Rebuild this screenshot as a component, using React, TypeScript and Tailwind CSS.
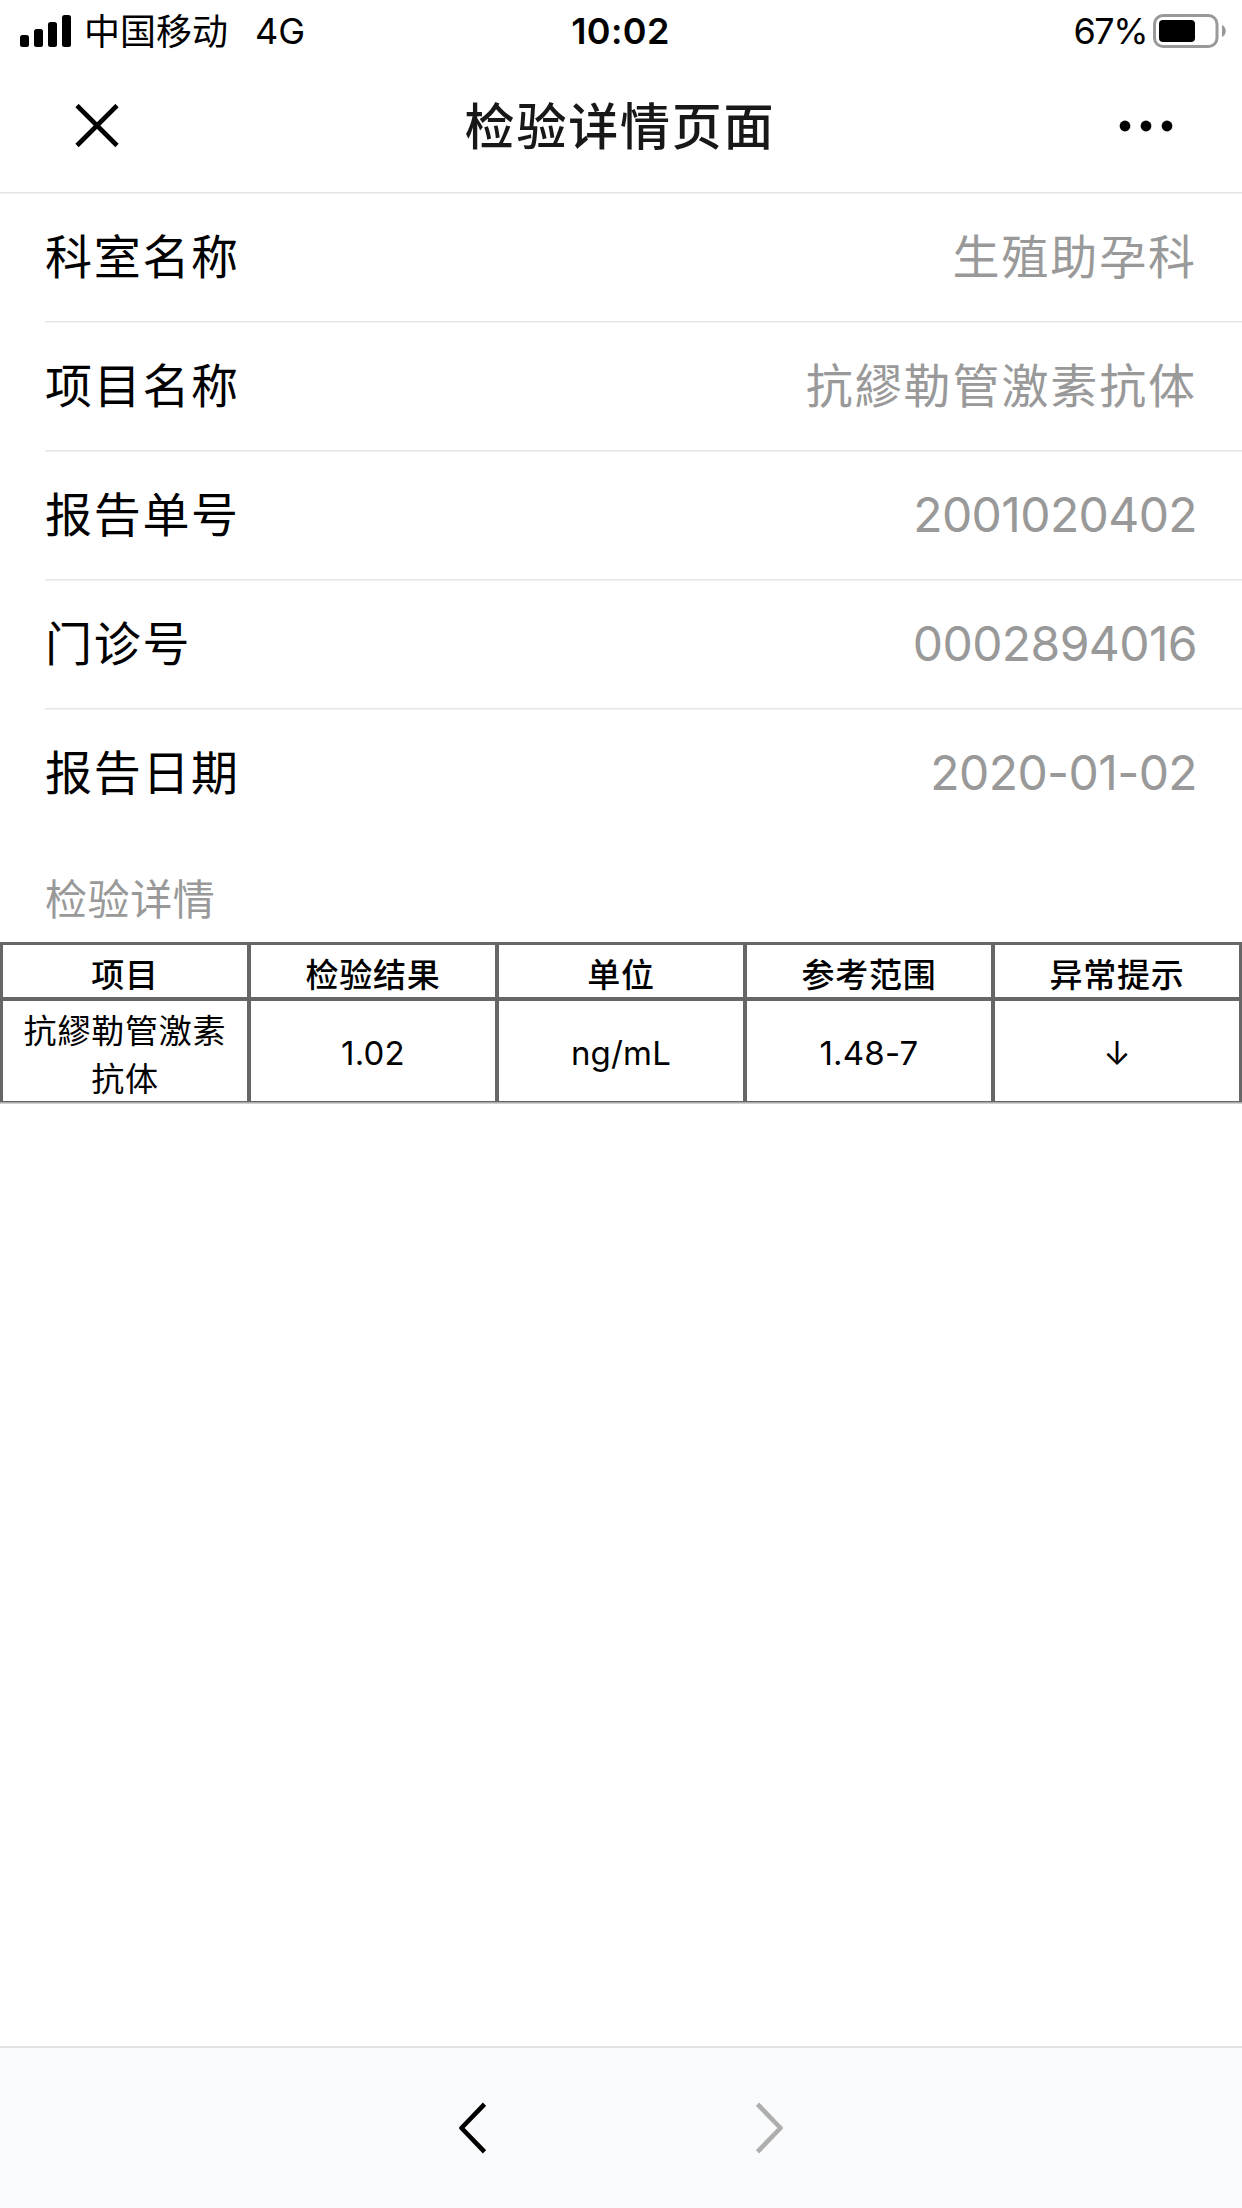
type TRow = {
  label: string;
  value: string;
  numeric?: boolean;
};

const rows: TRow[] = [
  { label: "科室名称", value: "生殖助孕科" },
  { label: "项目名称", value: "抗繆勒管激素抗体" },
  { label: "报告单号", value: "2001020402", numeric: true },
  { label: "门诊号", value: "0002894016", numeric: true },
  { label: "报告日期", value: "2020-01-02", numeric: true },
];

const columns = ["项目", "检验结果", "单位", "参考范围", "异常提示"];
const result = ["1.02", "ng/mL", "1.48-7", "↓"];

const StatusBar = () => {
  return (
    <div className="grid h-[61px] grid-cols-3 items-center pl-5 pr-4 text-[36px] leading-[56px] text-black">
      <div className="flex items-center">
        <svg width="51" height="32" viewBox="0 0 51 32" className="shrink-0">
          <rect x="0" y="20" width="9" height="12" rx="2.5" />
          <rect x="14" y="14" width="9" height="18" rx="2.5" />
          <rect x="28" y="7" width="9" height="25" rx="2.5" />
          <rect x="42" y="0" width="9" height="32" rx="2.5" />
        </svg>
        <span className="ml-[13px] whitespace-nowrap pt-[3px]">中国移动</span>
        <span className="ml-[27px]">4G</span>
      </div>
      <div className="pr-[5px] text-center font-semibold tracking-[0.4px]">10:02</div>
      <div className="flex items-center justify-end">
        <span className="tracking-[-1.5px]">67%</span>
        <svg width="73" height="34" viewBox="0 0 73 34" className="ml-1.5 shrink-0">
          <rect x="1.5" y="1.5" width="62.5" height="31" rx="8.5" fill="none" stroke="#999" strokeWidth="3" />
          <rect x="6" y="6" width="36" height="22" rx="4" />
          <path d="M69 11c5 2 5 10 0 12z" fill="#999" />
        </svg>
      </div>
    </div>
  );
};

const Header = () => {
  return (
    <div className="flex h-[131px] items-center justify-between pb-0.5 pl-[75px] pr-[69px]">
      <svg width="44" height="44" viewBox="0 0 44 44" fill="none" stroke="#000" strokeWidth="4.6">
        <path d="M2 1.5l40 40M42 1.5l-40 40" />
      </svg>
      <h1 className="pl-0.5 pt-[3px] text-[50px] font-medium leading-[76px] tracking-[1.8px] text-[#181818]">
        检验详情页面
      </h1>
      <svg width="54" height="12" viewBox="0 0 54 12">
        <circle cx="6" cy="6" r="5.4" />
        <circle cx="27" cy="6" r="5.4" />
        <circle cx="48" cy="6" r="5.4" />
      </svg>
    </div>
  );
};

const InfoRow = ({ label, value, numeric }: TRow) => {
  return (
    <div className="flex h-[129px] items-center justify-between border-t border-[#e4e4e4] pr-[45px] leading-[72px] shadow-[inset_0_1px_0_#f2f2f2]">
      <span className="text-[47px] tracking-[1.7px] text-black">{label}</span>
      {numeric ? (
        <span className="text-[48px] tracking-[-0.6px] text-[#999]">{value}</span>
      ) : (
        <span className="text-[47px] tracking-[1.9px] text-[#999]">{value}</span>
      )}
    </div>
  );
};

const ResultTable = () => {
  return (
    <div className="border-b border-[#d0d0d0]">
      <div className="grid grid-cols-[repeat(5,244px)] grid-rows-[52px_100px] gap-1 border-b border-[#aaa] bg-[#666] px-[3px] pb-px pt-[3px] text-center text-[33px] leading-[48px] text-black">
        {columns.map((name) => (
          <div key={name} className="flex items-center justify-center bg-white pt-[7px] font-medium tracking-[0.8px]">
            {name}
          </div>
        ))}
        <div className="flex items-center justify-center bg-white px-4 pt-[7px] tracking-[0.8px]">
          抗繆勒管激素抗体
        </div>
        {result.map((value) => (
          <div key={value} className="flex items-center justify-center bg-white pt-1 tracking-[0.2px]">
            {value}
          </div>
        ))}
      </div>
    </div>
  );
};

const BottomBar = () => {
  return (
    <div className="flex h-[162px] items-center justify-center gap-[270px] border-t-2 border-[#e1e3e5] bg-[#f9fafc]">
      <svg width="27" height="52" viewBox="0 0 27 52" fill="none" stroke="#000" strokeWidth="4.6">
        <path d="M25.5 2.2L2.5 26l23 23.8" strokeLinejoin="round" />
      </svg>
      <svg width="27" height="52" viewBox="0 0 27 52" fill="none" stroke="#aeaeae" strokeWidth="4.6">
        <path d="M1.5 2.2l23 23.8-23 23.8" strokeLinejoin="round" />
      </svg>
    </div>
  );
};

const App = () => {
  return (
    <div
      lang="zh-CN"
      className="flex h-[2208px] w-[1242px] flex-col overflow-hidden bg-white font-['Inter','Noto_Sans_CJK_SC',sans-serif]"
    >
      <StatusBar />
      <Header />
      <div className="border-t border-[#e4e4e4] pl-[45px] shadow-[inset_0_1px_0_#f2f2f2]">
        <div className="-mt-px">
          {rows.map((row) => (
            <InfoRow key={row.label} {...row} />
          ))}
        </div>
      </div>
      <div className="flex h-[105px] items-center pl-[45px] pt-5 text-[42px] leading-[60px] tracking-[0.6px] text-[#999]">
        检验详情
      </div>
      <ResultTable />
      <div className="grow" />
      <BottomBar />
    </div>
  );
};

export default App;
